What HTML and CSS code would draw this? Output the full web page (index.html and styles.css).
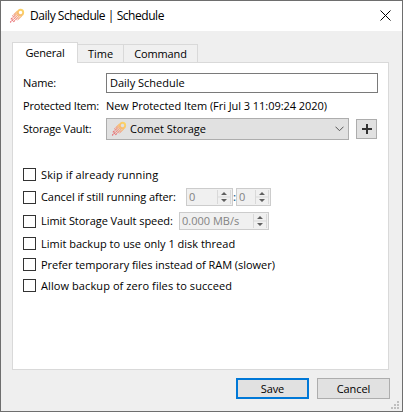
FILE: index.html
```html
<!DOCTYPE html>
<html lang="en">
<head>
<meta charset="utf-8">
<title>Daily Schedule | Schedule</title>
<link rel="stylesheet" href="styles.css">
</head>
<body>
<svg width="0" height="0" class="defs" aria-hidden="true">
  <defs>
    <linearGradient id="flame" gradientUnits="userSpaceOnUse" x1="14" y1="2" x2="2" y2="14">
      <stop offset="0" stop-color="#fbd564"/>
      <stop offset=".35" stop-color="#f8bd70"/>
      <stop offset=".6" stop-color="#f09a86"/>
      <stop offset="1" stop-color="#e4505c"/>
    </linearGradient>
    <symbol id="comet" viewBox="0 0 16 16">
      <g fill="none" stroke="url(#flame)" stroke-width="1.1">
        <circle cx="11.5" cy="4.5" r="2.7" stroke-width="1.9"/>
        <path d="M8.6 3L3.4 8.2M8.2 5.4L1.6 11.6M9 6.9L1.2 14.4M10.4 7.9L4.4 13.8M12.8 7.8L8 12.4" stroke-dasharray="5.6 .7 2.4 .6"/>
      </g>
    </symbol>
  </defs>
</svg>
<div class="window">
  <header class="titlebar">
    <svg class="comet"><use href="#comet"/></svg>
    <span class="title">Daily Schedule | Schedule</span>
    <svg class="close" viewBox="0 0 11 11"><path d="M.5 .5L10.5 10.5M10.5 .5L.5 10.5"/></svg>
  </header>
  <nav class="tabs">
    <span class="tab active">General</span>
    <span class="tab time">Time</span>
    <span class="tab command">Command</span>
  </nav>
  <main class="panel">
    <div class="field name"><span class="label">Name:</span><span class="input">Daily Schedule</span></div>
    <div class="field item"><span class="label tight">Protected Item:</span><span class="value">New Protected Item (Fri Jul 3 11:09:24 2020)</span></div>
    <div class="field vault">
      <span class="label tight">Storage Vault:</span>
      <span class="combo">
        <svg class="comet"><use href="#comet"/></svg>
        <span class="choice">Comet Storage</span>
        <svg class="chevron" viewBox="0 0 9 6"><path d="M.5 .7L4.5 4.7L8.5 .7"/></svg>
      </span>
      <span class="add"><svg viewBox="0 0 10 10"><path d="M5 0V10M0 5H10"/></svg></span>
    </div>
    <div class="options">
      <div class="option"><i class="box"></i><span class="skip">Skip if already running</span></div>
      <div class="option tall">
        <i class="box"></i><span class="after">Cancel if still running after:</span>
        <span class="spin hours">0<svg viewBox="0 0 14 14"><path class="rule" d="M.5 0V14M13.5 0V14M0 7H14"/><path d="M4 5L7 2L10 5zM4 9H10L7 12z"/></svg></span>
        <span class="colon">:</span>
        <span class="spin minutes">0<svg viewBox="0 0 14 14"><path class="rule" d="M.5 0V14M13.5 0V14M0 7H14"/><path d="M4 5L7 2L10 5zM4 9H10L7 12z"/></svg></span>
      </div>
      <div class="option tall">
        <i class="box"></i><span class="limit">Limit Storage Vault speed:</span>
        <span class="spin speed">0.000 MB/s<svg viewBox="0 0 14 14"><path class="rule" d="M.5 0V14M13.5 0V14M0 7H14"/><path d="M4 5L7 2L10 5zM4 9H10L7 12z"/></svg></span>
      </div>
      <div class="option"><i class="box"></i><span class="thread">Limit backup to use only 1 disk thread</span></div>
      <div class="option"><i class="box"></i><span class="temp">Prefer temporary files instead of RAM (slower)</span></div>
      <div class="option"><i class="box"></i><span class="zero">Allow backup of zero files to succeed</span></div>
    </div>
  </main>
  <footer class="actions">
    <span class="button primary">Save</span>
    <span class="button">Cancel</span>
  </footer>
  <svg class="grip" viewBox="0 0 8 8"><path d="M6 0h2v2h-2zM3 3h2v2h-2zM6 3h2v2h-2zM0 6h2v2h-2zM3 6h2v2h-2zM6 6h2v2h-2z"/></svg>
</div>
</body>
</html>
```
FILE: styles.css
```css
* { box-sizing: border-box; }
body {
  margin: 0;
  font: 11px/16px "Open Sans", "Noto Sans", sans-serif;
  color: #000;
  white-space: nowrap;
}
.defs { position: absolute; }
svg { display: block; flex: none; }
.window {
  position: relative;
  width: 403px;
  height: 412px;
  border: 1px solid #6e6e6e;
  background: #efefef;
  overflow: hidden;
}
.titlebar {
  display: flex;
  align-items: center;
  height: 30px;
  padding: 0 11px 1px 8px;
  background: #fff;
}
.comet { width: 16px; height: 16px; }
.title { margin-left: 5px; font-size: 12px; letter-spacing: -.45px; }
.close { width: 11px; height: 11px; margin-left: auto; stroke: #000; fill: none; }
.tabs {
  position: relative;
  display: flex;
  align-items: flex-end;
  height: 32px;
  margin: 0 0 -1px 11px;
}
.tab {
  height: 19px;
  border: 1px solid #d9d9d9;
  border-left: 0;
  background: #f0f0f0;
  text-align: center;
  line-height: 18px;
}
.tab.active {
  width: 66px;
  height: 21px;
  border-left: 1px solid #d9d9d9;
  border-bottom: 0;
  background: #fff;
  line-height: 20px;
  letter-spacing: -.2px;
}
.time { width: 46px; }
.command { width: 74px; letter-spacing: -.15px; }
.panel {
  width: 377px;
  height: 308px;
  margin-left: 11px;
  padding: 10px 10px 0;
  border: 1px solid #d9d9d9;
  background: #fff;
}
.field { display: flex; align-items: center; }
.label { width: 83px; letter-spacing: -.1px; }
.tight { letter-spacing: -.2px; }
.value { letter-spacing: -.05px; }
.name { height: 20px; }
.item { height: 16px; margin-top: 5px; }
.vault { height: 22px; margin-top: 4px; }
.input {
  width: 272px;
  height: 20px;
  padding-left: 3px;
  border: 1px solid #7a7a7a;
  line-height: 18px;
}
.combo {
  display: flex;
  align-items: center;
  width: 243px;
  height: 22px;
  padding: 0 4px;
  border: 1px solid #adadad;
  background: #e1e1e1;
}
.choice { margin-left: 3px; }
.chevron { width: 9px; height: 6px; margin-left: auto; fill: none; stroke: #555; }
.add {
  display: grid;
  place-items: center;
  width: 21px;
  height: 20px;
  margin-left: 7px;
  border: 1px solid #adadad;
  background: #e1e1e1;
}
.add svg { width: 10px; height: 10px; stroke: #333; stroke-width: 2; }
.options { margin-top: 24px; }
.option { display: flex; align-items: center; height: 21px; }
.tall { height: 24px; }
.box { flex: none; width: 13px; height: 13px; margin-right: 5px; border: 1px solid #333; }
.spin {
  display: flex;
  align-items: center;
  justify-content: space-between;
  height: 18px;
  padding: 0 1px 0 2px;
  border: 1px solid #ccc;
  background: #f0f0f0;
  color: #838383;
}
.spin svg { width: 14px; height: 14px; fill: #606060; }
.spin .rule { fill: none; stroke: #d9d9d9; }
.skip { letter-spacing: .12px; }
.after { width: 145px; letter-spacing: -.07px; }
.limit { width: 138px; letter-spacing: -.06px; }
.temp { letter-spacing: -.04px; }
.zero { letter-spacing: .09px; }
.hours { width: 47px; }
.colon { width: 3px; color: #1b5c8e; font-weight: 600; }
.minutes { width: 35px; }
.speed { width: 90px; }
.actions { display: flex; gap: 8px; margin: 8px 0 0 235px; }
.button {
  width: 73px;
  height: 21px;
  border: 1px solid #adadad;
  background: #e1e1e1;
  text-align: center;
  line-height: 20px;
  letter-spacing: -.1px;
}
.primary { border: 2px solid #0078d7; line-height: 18px; }
.grip { position: absolute; right: 3px; bottom: 2px; width: 8px; height: 8px; fill: #bfbfbf; }
```
